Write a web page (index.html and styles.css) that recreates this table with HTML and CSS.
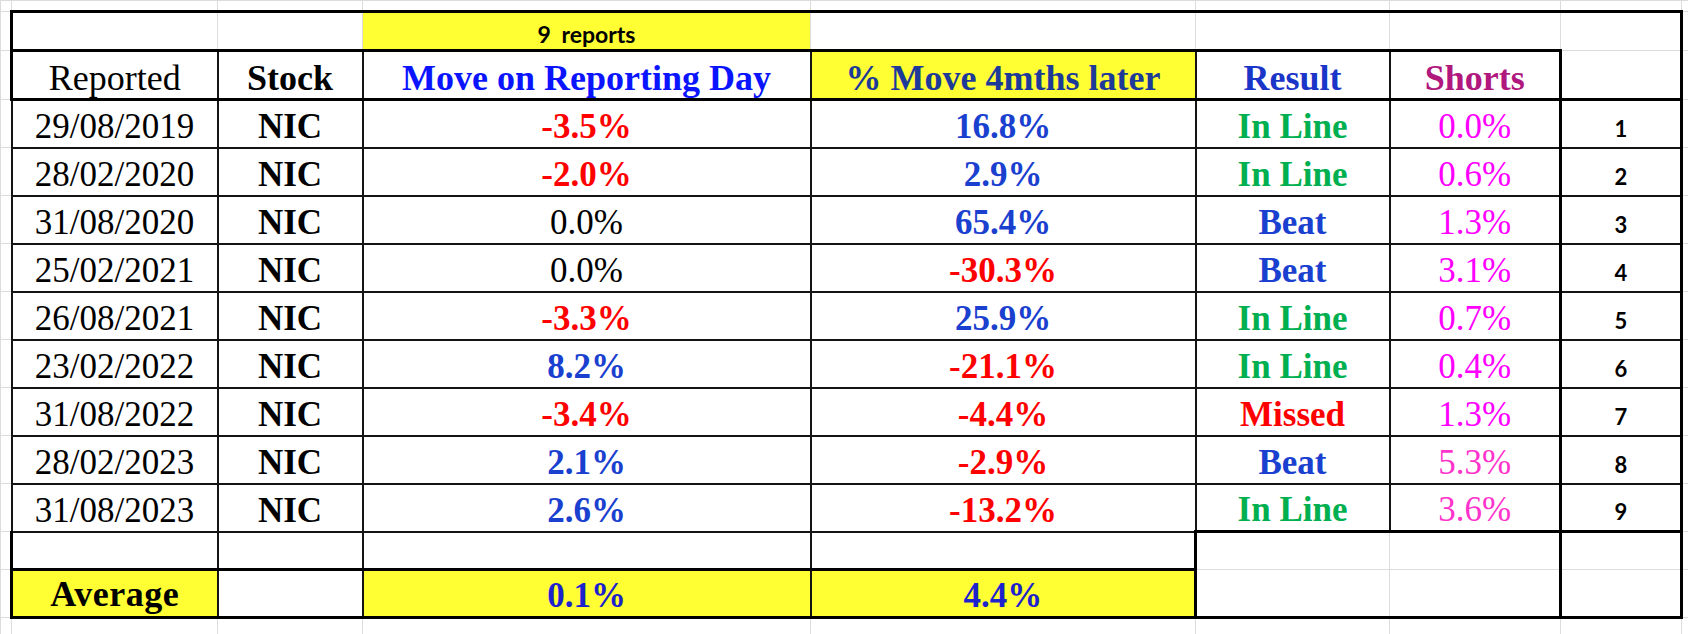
FILE: index.html
```html
<!DOCTYPE html>
<html>
<head>
<meta charset="utf-8">
<title>NIC reporting history</title>
<link rel="stylesheet" href="styles.css">
</head>
<body>
<table class="sheet">
  <colgroup>
    <col class="c-m0"><col class="c-a"><col class="c-b"><col class="c-c"><col class="c-d"><col class="c-e"><col class="c-f"><col class="c-g"><col class="c-m1">
  </colgroup>
  <tbody>
    <tr class="r-top"><td></td><td></td><td></td><td></td><td></td><td></td><td></td><td></td><td></td></tr>
    <tr class="r-cap">
      <td></td>
      <td class="tt lt"></td>
      <td class="tt"></td>
      <td class="tt y rep">9 reports</td>
      <td class="tt"></td>
      <td class="tt"></td>
      <td class="tt"></td>
      <td class="tt rt"></td>
      <td></td>
    </tr>
    <tr class="r-head">
      <td></td>
      <td class="d tt bt lt hd reg">Reported</td>
      <td class="d tt bt hd">Stock</td>
      <td class="d tt bt hd c-blue">Move on Reporting Day</td>
      <td class="d tt bt hd y c-navy">% Move 4mths later</td>
      <td class="d tt bt hd c-res">Result</td>
      <td class="d tt bt rt hd c-shorts">Shorts</td>
      <td class="bt rt"></td>
      <td></td>
    </tr>
    <tr class="r-data">
      <td></td><td class="d dt">29/08/2019</td><td class="d tk">NIC</td><td class="d v c-red">-3.5%</td><td class="d v c-val">16.8%</td><td class="d v c-green">In Line</td><td class="d rt sh">0.0%</td><td class="d rt num">1</td><td></td>
    </tr>
    <tr class="r-data">
      <td></td><td class="d dt">28/02/2020</td><td class="d tk">NIC</td><td class="d v c-red">-2.0%</td><td class="d v c-val">2.9%</td><td class="d v c-green">In Line</td><td class="d rt sh">0.6%</td><td class="d rt num">2</td><td></td>
    </tr>
    <tr class="r-data">
      <td></td><td class="d dt">31/08/2020</td><td class="d tk">NIC</td><td class="d dt">0.0%</td><td class="d v c-val">65.4%</td><td class="d v c-val">Beat</td><td class="d rt sh">1.3%</td><td class="d rt num">3</td><td></td>
    </tr>
    <tr class="r-data">
      <td></td><td class="d dt">25/02/2021</td><td class="d tk">NIC</td><td class="d dt">0.0%</td><td class="d v c-red">-30.3%</td><td class="d v c-val">Beat</td><td class="d rt sh">3.1%</td><td class="d rt num">4</td><td></td>
    </tr>
    <tr class="r-data">
      <td></td><td class="d dt">26/08/2021</td><td class="d tk">NIC</td><td class="d v c-red">-3.3%</td><td class="d v c-val">25.9%</td><td class="d v c-green">In Line</td><td class="d rt sh">0.7%</td><td class="d rt num">5</td><td></td>
    </tr>
    <tr class="r-data">
      <td></td><td class="d dt">23/02/2022</td><td class="d tk">NIC</td><td class="d v c-val">8.2%</td><td class="d v c-red">-21.1%</td><td class="d v c-green">In Line</td><td class="d rt sh">0.4%</td><td class="d rt num">6</td><td></td>
    </tr>
    <tr class="r-data">
      <td></td><td class="d dt">31/08/2022</td><td class="d tk">NIC</td><td class="d v c-red">-3.4%</td><td class="d v c-red">-4.4%</td><td class="d v c-red">Missed</td><td class="d rt sh">1.3%</td><td class="d rt num">7</td><td></td>
    </tr>
    <tr class="r-data">
      <td></td><td class="d dt">28/02/2023</td><td class="d tk">NIC</td><td class="d v c-val">2.1%</td><td class="d v c-red">-2.9%</td><td class="d v c-val">Beat</td><td class="d rt sh sh-pink">5.3%</td><td class="d rt num">8</td><td></td>
    </tr>
    <tr class="r-data">
      <td></td><td class="d dt">31/08/2023</td><td class="d tk">NIC</td><td class="d v c-val">2.6%</td><td class="d v c-red">-13.2%</td><td class="d bt v c-green">In Line</td><td class="d bt rt sh sh-pink">3.6%</td><td class="d bt rt num">9</td><td></td>
    </tr>
    <tr class="r-empty">
      <td></td>
      <td class="d lt bt"></td>
      <td class="d bt"></td>
      <td class="d bt"></td>
      <td class="d bt rt"></td>
      <td></td>
      <td class="rt"></td>
      <td class="rt"></td>
      <td></td>
    </tr>
    <tr class="r-avg">
      <td></td>
      <td class="d lt bt y avg">Average</td>
      <td class="d bt"></td>
      <td class="d bt y v c-avg">0.1%</td>
      <td class="d bt rt y v c-avg">4.4%</td>
      <td class="bt"></td>
      <td class="bt rt"></td>
      <td class="bt rt"></td>
      <td></td>
    </tr>
    <tr class="r-bot"><td></td><td></td><td></td><td></td><td></td><td></td><td></td><td></td><td></td></tr>
  </tbody>
</table>
</body>
</html>
```

FILE: styles.css
```css
html, body {
  margin: 0;
  padding: 0;
  background: #ffffff;
  overflow: hidden;
}

.sheet {
  border-collapse: collapse;
  table-layout: fixed;
  width: 1688px;
  font-family: "Liberation Serif", "Times New Roman", serif;
  color: #000;
}

.c-m0 { width: 11px; }
.c-a { width: 206px; }
.c-b { width: 145px; }
.c-c { width: 448px; }
.c-d { width: 385px; }
.c-e { width: 194px; }
.c-f { width: 171px; }
.c-g { width: 121px; }
.c-m1 { width: 7px; }

.r-top { height: 11px; }
.r-cap { height: 39px; }
.r-head { height: 49px; }
.r-data { height: 48px; }
.r-empty { height: 38px; }
.r-avg { height: 48px; }
.r-bot { height: 17px; }

.sheet td {
  border: 1px solid #dcdcdc;
  padding: 0;
  text-align: center;
  vertical-align: bottom;
  white-space: nowrap;
  overflow: hidden;
  font-size: 35px;
  line-height: 40px;
}

/* thin dark cell borders */
.sheet td.d { border: 2px solid #141414; }

/* thick borders */
.sheet td.tt { border-top: 3px solid #000; }
.sheet td.bt { border-bottom: 3px solid #000; }
.sheet td.lt { border-left: 3px solid #000; }
.sheet td.rt { border-right: 3px solid #000; }

.sheet td.y { background: #ffff33; }

.sheet td.rep {
  font-family: Lato, "Liberation Sans", sans-serif;
  font-weight: 700;
  font-size: 23px;
  line-height: 26px;
  word-spacing: 5px;
  padding-bottom: 2px;
}

.sheet td.hd {
  font-size: 36px;
  font-weight: 700;
}
.sheet td.reg { font-weight: 400; }

.sheet td.dt { font-weight: 400; }
.sheet td.tk { font-weight: 700; }
.sheet td.v { font-weight: 700; }

.sheet td.sh { color: #ff00ff; font-weight: 400; }
.sheet td.sh-pink { color: #ff33cc; }

.sheet td.num {
  font-family: Lato, "Liberation Sans", sans-serif;
  font-weight: 700;
  font-size: 22px;
  line-height: 24px;
  padding-bottom: 6px;
}

.sheet td.avg {
  font-weight: 700;
  font-size: 36px;
  letter-spacing: 0.5px;
  padding-bottom: 2px;
}

.c-red { color: #ff0000; }
.c-blue { color: #0a14ff; }
.c-navy { color: #1d3a99; }
.c-res { color: #1a35c8; }
.c-shorts { color: #b0187e; }
.c-val { color: #1a40cf; }
.c-green { color: #00b050; }
.c-avg { color: #1c22cc; }
```
